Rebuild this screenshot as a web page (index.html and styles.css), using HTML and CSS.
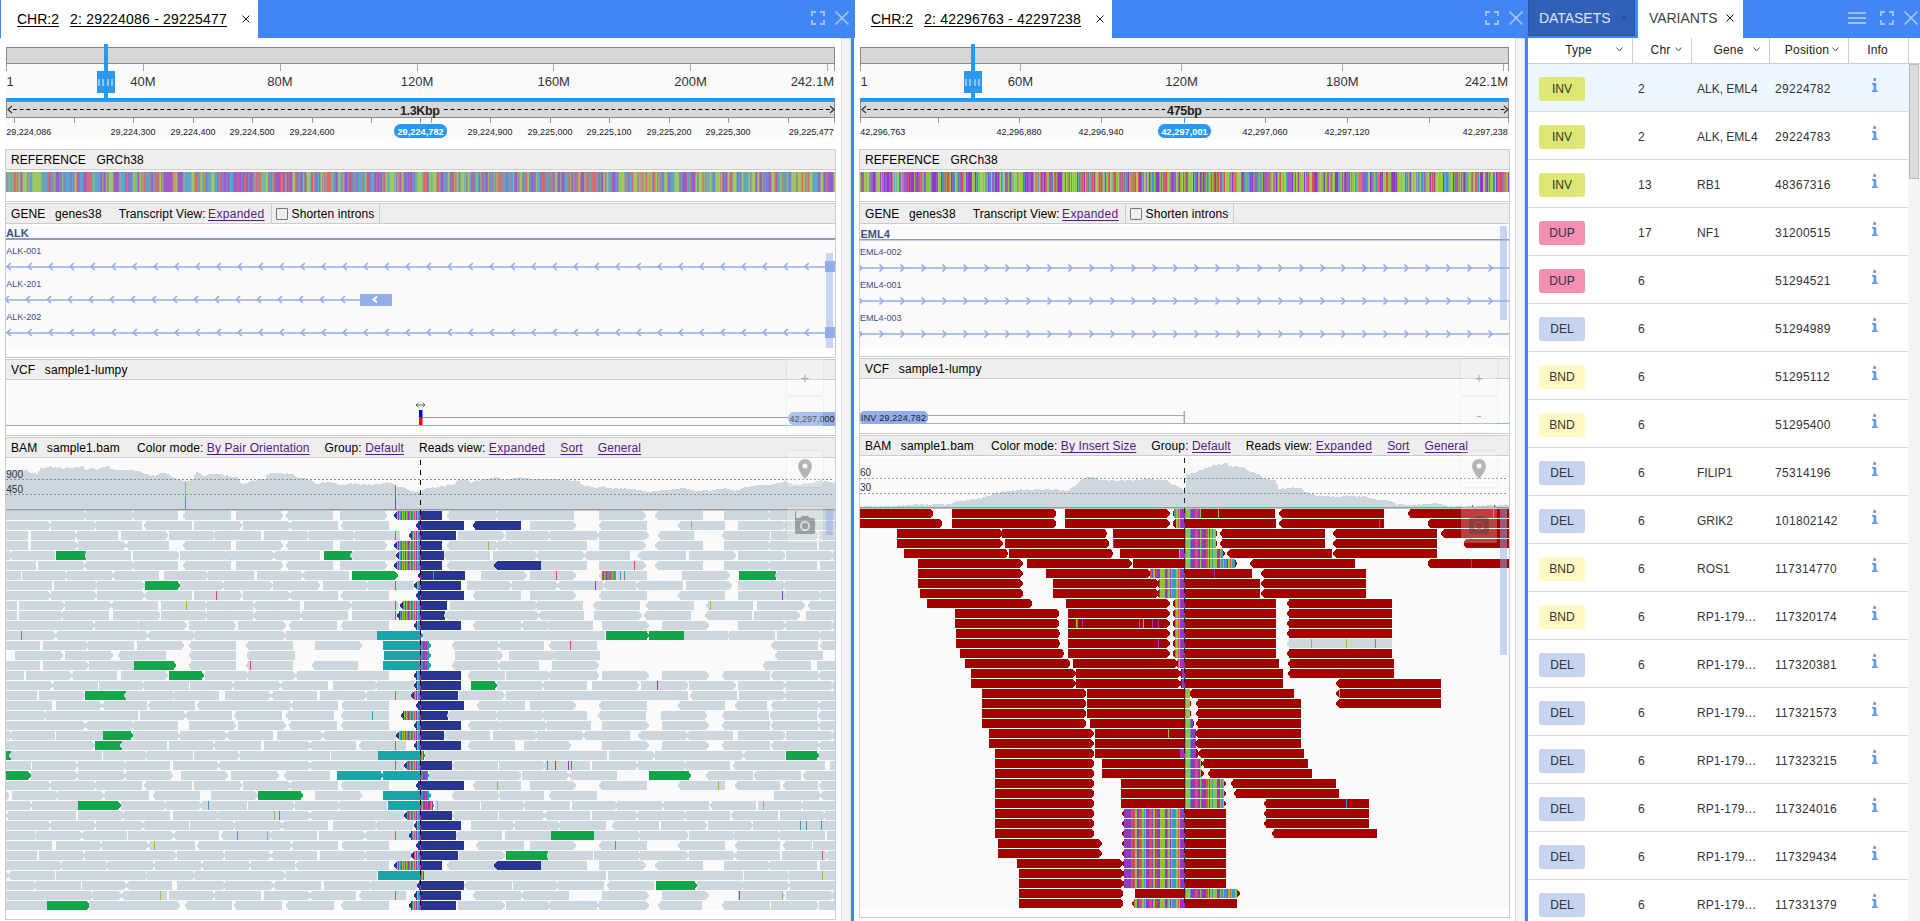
FILE: index.html
```html
<!DOCTYPE html>
<html lang="en">
<head>
<meta charset="utf-8">
<title>Genome Browser</title>
<link rel="stylesheet" href="styles.css">
</head>
<body>
<main class="app">
  <section class="panel panel-left">
    <header class="bar">
      <div class="tab"><a class="chr">CHR:2</a><a class="range">2: 29224086 - 29225477</a><svg class="x" viewBox="0 0 8 8"><path d="M.5 .5l7 7M7.5 .5l-7 7"/></svg></div>
      <div class="tools"><svg class="ico fs" viewBox="0 0 14 14"><path d="M1 5V1H5M9 1H13V5M13 9V13H9M5 13H1V9"/></svg><svg class="ico cl" viewBox="0 0 14 14"><path d="M.5 .5l13 13M13.5 .5l-13 13"/></svg></div>
    </header>
    <div class="body">
      <div class="tracks">
        <svg class="ruler" id="ruler-a" viewBox="6 44 829 95"></svg>
        <article class="track"><h3><span>REFERENCE</span><span>GRCh38</span></h3><svg class="seq" id="seq-a" viewBox="6 172 829 20"></svg></article>
        <article class="track gene"><h3><span>GENE</span><span>genes38</span><span class="opt">Transcript View: <a class="ex">Expanded</a></span><label><i></i>Shorten introns</label></h3><svg class="cv" id="gene-a" viewBox="6 226 829 122"></svg></article>
        <article class="track vcf"><h3><span>VCF</span><span>sample1-lumpy</span></h3><svg class="cv" id="vcf-a" viewBox="6 382 829 44"></svg></article>
        <article class="track bam"><h3><span>BAM</span><span>sample1.bam</span><span class="opt">Color mode: <a>By Pair Orientation</a></span><span class="opt">Group: <a>Default</a></span><span class="opt">Reads view: <a class="ex">Expanded</a></span><span class="opt"><a>Sort</a></span><span class="opt"><a>General</a></span></h3><svg class="cv" id="bam-a" viewBox="6 460 829 450"></svg></article>
      </div>
      <div class="gutter"></div>
      <div class="float"><b>+</b><b></b><b class="gap"><svg class="pin" viewBox="0 0 14 20"><path fill-rule="evenodd" d="M7 0a7 7 0 0 0-7 7c0 5.200 7 13 7 13s7-7.800 7-13a7 7 0 0 0-7-7zm0 4.500a2.500 2.500 0 1 1 0 5 2.500 2.500 0 0 1 0-5z"/></svg></b><b class="gap2"><svg class="cam" viewBox="0 0 20 18"><path fill-rule="evenodd" d="M7 0L5.200 2H2a2 2 0 0 0-2 2v12a2 2 0 0 0 2 2h16a2 2 0 0 0 2-2V4a2 2 0 0 0-2-2h-3.200L13 0zM10 5a5 5 0 1 1 0 10 5 5 0 0 1 0-10z"/><circle cx="10" cy="10" r="3.200"/></svg></b></div>
    </div>
  </section>
  <section class="panel panel-mid">
    <header class="bar">
      <div class="tab"><a class="chr">CHR:2</a><a class="range">2: 42296763 - 42297238</a><svg class="x" viewBox="0 0 8 8"><path d="M.5 .5l7 7M7.5 .5l-7 7"/></svg></div>
      <div class="tools"><svg class="ico fs" viewBox="0 0 14 14"><path d="M1 5V1H5M9 1H13V5M13 9V13H9M5 13H1V9"/></svg><svg class="ico cl" viewBox="0 0 14 14"><path d="M.5 .5l13 13M13.5 .5l-13 13"/></svg></div>
    </header>
    <div class="body">
      <div class="tracks">
        <svg class="ruler" id="ruler-b" viewBox="860 44 649 95"></svg>
        <article class="track"><h3><span>REFERENCE</span><span>GRCh38</span></h3><svg class="seq" id="seq-b" viewBox="860 172 649 20"></svg></article>
        <article class="track gene"><h3><span>GENE</span><span>genes38</span><span class="opt">Transcript View: <a class="ex">Expanded</a></span><label><i></i>Shorten introns</label></h3><svg class="cv" id="gene-b" viewBox="860 226 649 121"></svg></article>
        <article class="track vcf"><h3><span>VCF</span><span>sample1-lumpy</span></h3><svg class="cv" id="vcf-b" viewBox="860 381 649 43"></svg></article>
        <article class="track bam"><h3><span>BAM</span><span>sample1.bam</span><span class="opt">Color mode: <a>By Insert Size</a></span><span class="opt">Group: <a>Default</a></span><span class="opt">Reads view: <a class="ex">Expanded</a></span><span class="opt"><a>Sort</a></span><span class="opt"><a>General</a></span></h3><svg class="cv" id="bam-b" viewBox="860 458 649 450"></svg></article>
      </div>
      <div class="gutter"></div>
      <div class="float"><b>+</b><b>-</b><b class="gap"><svg class="pin" viewBox="0 0 14 20"><path fill-rule="evenodd" d="M7 0a7 7 0 0 0-7 7c0 5.200 7 13 7 13s7-7.800 7-13a7 7 0 0 0-7-7zm0 4.500a2.500 2.500 0 1 1 0 5 2.500 2.500 0 0 1 0-5z"/></svg></b><b class="gap2"><svg class="cam" viewBox="0 0 20 18"><path fill-rule="evenodd" d="M7 0L5.200 2H2a2 2 0 0 0-2 2v12a2 2 0 0 0 2 2h16a2 2 0 0 0 2-2V4a2 2 0 0 0-2-2h-3.200L13 0zM10 5a5 5 0 1 1 0 10 5 5 0 0 1 0-10z"/><circle cx="10" cy="10" r="3.200"/></svg></b></div>
    </div>
  </section>
  <section class="panel panel-right">
    <header class="bar">
      <div class="tab off"><span>DATASETS</span><svg class="x" viewBox="0 0 8 8"><path d="M.5 .5l7 7M7.5 .5l-7 7"/></svg></div>
      <div class="tab on"><span>VARIANTS</span><svg class="x" viewBox="0 0 8 8"><path d="M.5 .5l7 7M7.5 .5l-7 7"/></svg></div>
      <div class="tools"><svg class="ico mn" viewBox="0 0 18 12"><path d="M0 1H18M0 6H18M0 11H18"/></svg><svg class="ico fs" viewBox="0 0 14 14"><path d="M1 5V1H5M9 1H13V5M13 9V13H9M5 13H1V9"/></svg><svg class="ico cl" viewBox="0 0 14 14"><path d="M.5 .5l13 13M13.5 .5l-13 13"/></svg></div>
    </header>
    <div class="thead">
      <div class="c1">Type<svg viewBox="0 0 7 5"><path d="M.5 .5l3 3.500 3-3.500"/></svg></div>
      <div class="c2">Chr<svg viewBox="0 0 7 5"><path d="M.5 .5l3 3.500 3-3.500"/></svg></div>
      <div class="c3">Gene<svg viewBox="0 0 7 5"><path d="M.5 .5l3 3.500 3-3.500"/></svg></div>
      <div class="c4">Position<svg viewBox="0 0 7 5"><path d="M.5 .5l3 3.500 3-3.500"/></svg></div>
      <div class="c5">Info</div>
    </div>
    <div class="scroll"><div class="rows" id="rows"></div><div class="sb"><div class="thumb"></div></div></div>
  </section>
</main>
<script src="app.js"></script>
</body>
</html>
```
FILE: styles.css
```css
* { box-sizing: border-box; }
body { margin: 0; overflow: hidden; background: #fff; font: 12px/16px "Liberation Sans", Arial, sans-serif; color: #000; }
svg { display: block; }
.app { display: flex; height: 921px; }
.panel { position: relative; height: 921px; display: flex; flex-direction: column; background: #fff; }
.panel-left { width: 854px; border-right: 3px solid #4285f5; }
.panel-mid { width: 674px; border-right: 3px solid #4285f5; }
.panel-right { width: 392px; }
.bar { height: 38px; flex: none; background: #4285f5; display: flex; align-items: flex-start; }
.panel-left .bar { margin-right: -1px; }
.tab { display: flex; align-items: center; height: 38px; width: 257px; margin-left: 1px; background: #fff; font-size: 14px; padding-left: 16px; color: #000; }
.tab a { text-decoration: underline; text-underline-offset: 2px; }
.tab .chr { width: 53px; }
.tab .range { width: 172px; letter-spacing: .2px; white-space: nowrap; }
.x { width: 8px; height: 8px; fill: none; stroke: currentColor; stroke-width: .9; }
.tools { margin-left: auto; display: flex; align-items: center; height: 36px; gap: 10px; padding-right: 3px; }
.panel-mid .tools, .panel-right .tools { padding-right: 2px; }
.ico { width: 14px; height: 14px; fill: none; stroke: #a0c2fa; stroke-width: 2; }
.ico.cl { stroke-width: 1.700; }
.ico.mn { width: 18px; height: 12px; margin-right: 4px; }
.body { flex: 1; display: flex; padding-left: 5px; min-height: 0; }
.tracks { flex: none; width: 831px; padding-top: 6px; margin-right: 5px; }
.panel-mid .tracks { width: 651px; }
.gutter { width: 10px; flex: none; background: #f5f5f5; border: 1px solid #ddd; border-bottom: 0; }
.ruler { width: 829px; height: 95px; margin: 0 0 10px 1px; background: #fafafa; }
.panel-mid .ruler, .panel-mid .seq, .panel-mid .cv { width: 649px; }
.track { height: 53px; border: 1px solid #ccc; margin-bottom: 1px; }
.track h3 { margin: 0 0 2px; height: 20px; background: #eee; border-bottom: 1px solid #ccc; font-size: 12px; font-weight: 400; line-height: 20px; display: flex; padding-left: 5px; letter-spacing: .1px; white-space: nowrap; }
.track h3 > span { margin-right: 10.500px; }
.gene h3 > span, .vcf h3 > span, .bam h3 > span { margin-right: 9.500px; }
.track h3 > span:nth-child(2) { margin-right: 17px; }
.track h3 .opt { margin-right: 15px; }
.track h3 a { color: #551a8b; text-decoration: underline; text-underline-offset: 2px; }
.track h3 a.ex { letter-spacing: .3px; }
.gene h3 a.ex { margin-left: -1px; }
.track label { border: solid #ccc; border-width: 0 1px; display: flex; align-items: center; gap: 4px; padding: 0 5px 0 4px; margin-left: -9px; }
.track label i { width: 12px; height: 12px; border: 1px solid #767676; border-radius: 1px; }
.seq { width: 829px; height: 20px; }
.cv { width: 829px; background: #fafafa; }
.gene { height: 155px; } .vcf { height: 77px; } .bam { height: 483px; }
.panel-mid .gene { height: 154px; } .panel-mid .vcf { height: 76px; }
.float { position: absolute; left: 787px; top: 359px; width: 36px; }
.panel-mid .float { left: 607px; }
.float b { display: flex; align-items: center; justify-content: center; width: 36px; height: 36px; margin-bottom: 2px; background: rgba(250,250,250,.25); border-radius: 2px; box-shadow: 0 0 3px rgba(0,0,0,.09); font: 15px "Liberation Sans", sans-serif; color: #aaa; }
.float .gap { margin-top: 18px; }
.float .gap2 { margin-top: 20px; }
.pin { width: 14px; height: 20px; fill: #b5b5b5; }
.cam { width: 20px; height: 18px; fill: rgba(60,60,60,.4); }
svg text { font-family: "Liberation Sans", Arial, sans-serif; }

.panel-right .tab { width: 107px; height: 36px; margin-left: 0; padding: 0 0 0 10px; background: #3160b8; color: #dfe7f6; letter-spacing: -.05px; border: 1px solid #2b57a8; border-width: 0 1px 1px; }
.panel-right .tab span { width: 81px; }
.panel-right .tab.off .x { color: #244a90; }
.panel-right .tab.on { height: 38px; width: 105px; margin-left: 3px; padding-bottom: 2px; background: #fff; color: #444; border: 0; padding-left: 11px; }
.panel-right .tab.on span { width: 77px; }
.panel-right .tab.on .x { color: #000; }
.thead { height: 26px; flex: none; display: grid; grid-template-columns: 105px 59px 78px 79px 60px 1fr; border-bottom: 1px solid #ccc; }
.thead div { border-right: 1px solid #ccc; position: relative; line-height: 24px; text-align: center; color: #222; letter-spacing: .15px; }
.thead .c1 { padding-right: 3px; } .thead .c2 { padding-right: 3px; } .thead .c3 { padding-right: 4px; } .thead .c4 { padding-right: 4px; letter-spacing: .2px; } .thead .c5 { padding-right: 2px; }
.thead svg { position: absolute; right: 9px; top: 9px; width: 7px; height: 5px; fill: none; stroke: #555; stroke-width: 1; }
.thead .c4 svg { right: 9px; }
.scroll { display: flex; flex: 1; overflow: hidden; }
.rows { width: 380px; flex: none; }
.row { display: grid; grid-template-columns: 99px 59px 78px 79px 1fr; align-items: center; height: 48px; padding: 2px 0 0 11px; border-bottom: 1px solid #d8d8d8; color: #333; letter-spacing: .3px; }
.row:first-child { background: #eef6ff; }
.badge { width: 46px; height: 24px; border-radius: 3px; line-height: 24px; text-align: center; letter-spacing: 0; font-size: 12px; }
.INV { background: #dce775; } .DUP { background: #f48fb1; } .DEL { background: #c7d4f0; } .BND { background: #fff9c4; }
.info { width: 6px; height: 14px; margin: -7px 0 0 18px; fill: #6299f8; }
.gname { letter-spacing: 0; }
.sb { flex: 1; background: #f5f5f5; }
.thumb { height: 115px; width: 10px; margin-left: 1px; background: #dcdcdc; border: 1px solid #bbb; }
```
FILE: app.js
```js
const $ = id => document.getElementById(id);
const LIME = '#8cc63f', RED = '#dc5050', PURPLE = '#9138c4', BLUE = '#3f98c4';
const BASES = { g: LIME, r: RED, p: PURPLE, b: BLUE };
const fill = (x, y, w, h, c, extra = '') => `<rect x="${x}" y="${y}" width="${w}" height="${h}" fill="${c}" ${extra}/>`;
const label = (x, y, s, size, anchor = 'middle', extra = '') => `<text x="${x}" y="${y}" font-size="${size}" text-anchor="${anchor}" ${extra}>${s}</text>`;
function rng(seed) { return () => (seed = (seed * 1103515245 + 12345) % 2147483648) / 2147483648; }

/* Chromosome and position rulers */
function ruler(id, o) {
  const { x0, x1 } = o, w = x1 - x0;
  let s = `<g shape-rendering="crispEdges">` + fill(x0, 47, w, 17, '#888') + fill(x0 + 1, 48, w - 2, 15, '#d7d7d7');
  s += fill(x0, 64, 1, 7, '#999') + fill(x1 - 1, 64, 1, 7, '#999');
  o.top.forEach(t => s += fill(Math.round(t[0] - .5), 64, 1, 7, '#aaa'));
  s += fill(x0, 98, w, 3, '#2b98f0') + fill(x0, 101, w, 17, '#888') + fill(x0 + 1, 102, w - 2, 15, '#d7d7d7');
  s += fill(o.slider, 44, o.sliderW, 54, '#2b98f0') + fill(o.slider - 7, 71, 18, 22, '#2b98f0');
  [-6, -2, 3, 7].forEach(d => s += fill(o.slider + d, 79, 2, 7, '#8fc8f8'));
  o.ticks.forEach(t => s += fill(Math.round(t - .5), 118, 1, 5, '#999'));
  s += fill(Math.round(o.mid - .5), 118, 1, 5, '#2b98f0') + '</g>';
  o.top.forEach(t => s += t[1] ? label(t[0], 86, t[1], 13, 'middle', 'fill="#333"') : '');
  s += label(x0 + .5, 86, '1', 13, 'start', 'fill="#333"') + label(x1 - 1, 86, '242.1M', 13, 'end', 'fill="#333"');
  s += `<path d="M${x0 + 7} 109.5H${o.span[0] - 2}M${o.span[1] + 4} 109.5H${x1 - 4}" stroke="#000" stroke-dasharray="3.700 3"/>`;
  s += `<path d="M${x0 + 6} 106l-4 3.500 4 3.500M${x1 - 5} 106l4 3.500-4 3.500" fill="none" stroke="#333" stroke-width="1.200"/>`;
  s += label((o.span[0] + o.span[1]) / 2, 114.700, o.length, 12.5, 'middle', `font-weight="bold" fill="#222" textLength="${o.span[1] - o.span[0]}"`);
  s += label(x0 + .3, 134.700, o.first, 9, 'start', 'fill="#222"') + label(x1 - 1.3, 134.700, o.last, 9, 'end', 'fill="#222"');
  o.labels.forEach(t => s += label(t[0], 134.700, t[1], 9, 'middle', 'fill="#222"'));
  s += `<rect x="${o.mid - 26.500}" y="124" width="53" height="14" rx="6.500" fill="#2b98f0"/>` + label(o.mid, 134.700, o.here, 9, 'middle', 'fill="#fff" font-weight="bold" textLength="46"');
  $(id).innerHTML = s;
}
ruler('ruler-a', { x0: 6, x1: 835, slider: 104, sliderW: 4, top: [[143, '40M'], [280, '80M'], [417, '120M'], [553.7, '160M'], [690.5, '200M'], [827.5, '']],
  ticks: [14.5, 74, 133.5, 193, 252.5, 312, 371.7, 431.5, 490.5, 550, 609.5, 669, 728.5, 788, 834.5], mid: 420.5, span: [400, 440], length: '1.3Kbp',
  first: '29,224,086', last: '29,225,477', here: '29,224,782',
  labels: [[133, '29,224,300'], [193, '29,224,400'], [252, '29,224,500'], [312, '29,224,600'], [490, '29,224,900'], [550, '29,225,000'], [609, '29,225,100'], [669, '29,225,200'], [728, '29,225,300']] });
ruler('ruler-b', { x0: 860, x1: 1509, slider: 971, sliderW: 4, top: [[1020.5, '60M'], [1181.5, '120M'], [1342.3, '180M'], [1503, '']],
  ticks: [860.5, 938.5, 1019.7, 1101.5, 1265, 1347, 1429, 1508.5], mid: 1184.5, span: [1167, 1202], length: '475bp',
  first: '42,296,763', last: '42,297,238', here: '42,297,001',
  labels: [[1019, '42,296,880'], [1101, '42,296,940'], [1265, '42,297,060'], [1347, '42,297,120']] });

/* Reference sequence strips */
function hex(c) { return [1, 3, 5].map(i => parseInt(c.slice(i, i + 2), 16)); }
function sequence(id, x0, w, seed, soft) {
  const r = rng(seed), cols = (soft ? [LIME, RED, PURPLE, BLUE, LIME, PURPLE, BLUE] : [LIME, PURPLE, RED, LIME, PURPLE, BLUE, LIME, PURPLE]).map(hex);
  let s = '<g shape-rendering="crispEdges">', prev = cols[0];
  for (let x = 0; x < w; x++) {
    const a = r() < .25 ? prev : cols[Math.floor(r() * cols.length)], k = soft ? .38 : (r() < .5 ? 0 : .3);
    const gain = soft ? .8 : (r() < .5 ? 1 : .82), lift = soft ? 44 : (gain === 1 ? 0 : 44);
    const mix = a.map((v, i) => Math.round((v * (1 - k) + prev[i] * k) * gain + lift));
    prev = a;
    s += fill(x0 + x, 172, 1, 20, `rgb(${mix})`);
  }
  $(id).innerHTML = s + '</g>';
}
sequence('seq-a', 6, 829, 77, true);
sequence('seq-b', 860, 649, 1234, false);

/* Gene tracks */
const INK = '#3c5083', LINE = '#aec1ef', MARK = '#92aee8';
function arrows(y, tip, end, dir, x0, stop) {
  let s = fill(x0, y - 1, stop - x0, 2, LINE, 'shape-rendering="crispEdges"');
  for (let x = tip; x < end; x += 21) s += `<path d="M${x + 3.500 * dir} ${y - 3.500}L${x} ${y}L${x + 3.500 * dir} ${y + 3.500}" fill="none" stroke="${MARK}" stroke-width="1.700"/>`;
  return s;
}
(() => {
  let s = label(6, 237, 'ALK', 11, 'start', `font-weight="bold" fill="${INK}"`) + fill(6, 238, 829, 2, '#929cb8');
  s += fill(826, 253, 7, 95, '#c8d5f0');
  [['ALK-001', 266.5], ['ALK-201', 299.5], ['ALK-202', 332.5]].forEach(([n, y], i) => {
    s += label(6.3, y - 13, n, 9, 'start', `fill="${INK}"`);
    s += i === 1 ? arrows(y, 5.5, 355, 1, 6, 360) : arrows(y, 7.300, 820, 1, 6, 835);
    s += i === 1 ? fill(360, 294, 32, 12, MARK) + `<path d="M377 296.500l-3.500 3 3.500 3" fill="none" stroke="#fff" stroke-width="1.800"/>` : fill(825, y - 5.5, 10, 11, MARK);
  });
  $('gene-a').innerHTML = s;
  s = label(860.5, 238, 'EML4', 11, 'start', `font-weight="bold" fill="${INK}"`) + fill(860, 239, 649, 1.500, '#929cb8');
  [['EML4-002', 268], ['EML4-001', 301], ['EML4-003', 334]].forEach(([n, y]) => {
    s += label(860, y - 13.200, n, 9, 'start', `fill="${INK}"`) + arrows(y, 862, 1500, -1, 860, 1509);
  });
  s += fill(1500, 226, 7, 94, 'rgba(146,174,232,.5)');
  $('gene-b').innerHTML = s;

  s = `<path d="M416 405H425M418.500 402.800l-2.500 2.200 2.500 2.200M422.500 402.800l2.500 2.200-2.500 2.200" fill="none" stroke="#555" stroke-width=".9"/>`;
  s += fill(6, 425, 829, 1, MARK) + fill(422, 417, 368, 1, '#999') + fill(419, 410, 3.5, 7, '#00f') + fill(419, 417, 3.5, 8, '#f00');
  s += `<rect x="788" y="412" width="52" height="13" rx="6" fill="${MARK}"/>` + label(834.5, 421.7, '42,297,000', 9, 'end', 'fill="#222"');
  $('vcf-a').innerHTML = s;
  s = fill(860, 423, 649, 1, MARK) + fill(925, 415, 259, 1, '#aaa') + fill(1183.5, 411, 1.5, 12, '#aaa');
  s += `<rect x="859.500" y="411" width="68.500" height="12.500" rx="5" fill="${MARK}"/>` + label(861, 420.500, 'INV 29,224,782', 9, 'start', 'fill="#222" textLength="65"');
  $('vcf-b').innerHTML = s;
})();

/* Alignments: [colour]start-end[direction], single-letter ticks, m = clipped bases */
const C1 = ' b1242-1262< m1251-1261', C2 = ' b1183-1262< m1190-1261', C3 = ' b1248-1262<', C4 = ' b1227-1262< m1236-1261';
const readsA = [
  ['18-122 122-260> 259-395 394-534< 549-693< 708-849> 858-999< 1020-1161>' + C2, 'b0-66 81-227< 226-365< 365-462 537-677> 706-849< 912-1051> 1049-1245 r1126'],
  ['18-152> 153-290> 288-426 432-576< 582-726> 729-871> 868-1014< 1023-1167<' + C3, 'b0-132 b159-303< 330-467> 537-681< 774-915< l814 954-1097> 1095-1245'],
  ['18-84 93-231> 230-354 363-504> 507-647> 644-783 792-928> 927-1067> 1066-1200 r1186' + C4, 'b0-108 114-254> 258-392> 391-537> 537-686> 714-822< 906-1050< 1052-1195> 1196-1245'],
  ['18-84 93-233> 234-378> 378-507< 549-693< 708-849> 858-999< 1020-1161>' + C2, 'b0-66 81-227< l205 226-365< 365-501 537-677> 706-849< 912-1051> 1049-1191 1196-1245'],
  ['18-29 28-165< g168-258 254-393< 399-538> 540-682> 679-823> 820-960< g972-1056 1051-1189< b1189-1262< m1197-1261', 'b0-72 71-210< 219-353> 353-493> 493-630< 655-798< 807-947> 954-1096> 1098-1240> 1238-1245'],
  ['18-108 114-255> 254-395< 394-534< 549-693< 708-849> 858-999< 1020-1161>' + C2, 'b0-66 81-227< b223-363< 363-501 537-677> r643 706-849< 912-1051> 1049-1191 1200-1245'],
  ['18-63 66-203> 202-337 337-477< 492-626> 625-762 771-909> 907-1047< g1056-1193> b1255-1262<', 'b0-135 c40 183-320> 330-467> r409 537-681< m546-588 c601 c613 786-929> g957-1069 1065-1208< 1207-1245'],
  ['18-156 162-292> 291-434> g435-540> 541-674> 673-818> 819-960> 969-1106> 1104-1245> r1186 b1243-1262< m1252-1261', 'b0-123 141-275> 275-414> 412-549< p526 550-648< 649-789< 798-935> 954-1097> 1095-1245'],
  ['18-152> 153-290> 290-433> 433-576< 582-726> r649 729-871> 868-1014< 1023-1167<' + C3, 'b0-132 159-303< 330-467> 537-681< 774-915< 954-1094 p1088 1092-1198< 1196-1245<'],
  ['18-51 57-194> 195-334> 333-474< 483-623> l559 622-760 760-900< 912-1055> 1056-1198> r1186 b1201-1262< m1209-1261', 'b0-81 90-218 218-352> 351-489 520-660< 678-822< 858-999< l871 1011-1154> 1164-1245<'],
  ['18-51 57-190> 189-327 339-481> 483-623> 622-760 760-900< 900-1044< 1056-1190 r1186 b1191-1262< m1199-1261', 'b0-75 73-218< 217-357> 355-492< 522-665> 672-813< 856-996< 1002-1139> 1158-1245'],
  ['18-141 140-284> 285-420> 418-560> 567-708> 714-857> 867-1011< 1023-1167<' + C1, 'b0-123 159-303< 304-383< 381-519< 546-686> 726-866> 954-1097> 1098-1240> 1238-1245'],
  ['18-166> r64 166-306< 305-444> 442-578< 577-716< 715-857> 857-992 991-1131 t1131-1269>', '9-144 143-281 280-420 418-555 g558-687> g687-792 793-930> 928-1065 1071-1205> 1204-1245'],
  ['18-120 129-266> 264-402 411-552> 567-708< 738-879< 945-1086> t1149-1293> m1268-1285', '96-235< 234-372< 387-531< r451 1054-1194< 1200-1245<'],
  ['45-189> 195-339> 354-498< 567-708< 740-885< t1152-1293> m1268-1285', '105-249> 267-405> 402-540 1065-1209<'],
  ['18-120 129-266> 266-402 g402-528> 567-708< 738-879< r751 936-1074< t1149-1293> m1268-1285', '96-235< 234-357< 396-536> 1029-1173< 1191-1245'],
  ['18-72 78-215> 213-351< 363-504> g507-612> 615-745> 745-887> 885-1031< 1030-1167' + C1, 'b0-123 144-255< 258-391> 391-537> 546-686> 726-866> 906-1050< 1053-1194< 1195-1245<'],
  ['18-158> 156-294< 297-433> 432-567 570-702> 701-843> 842-984< 999-1133> 1132-1243' + C1, 'b0-123 g153-231> 231-366 366-501< 516-657> 663-805> p712 807-947> 954-1097> 1098-1240> 1238-1245'],
  ['18-111 117-255> g255-379 373-518< 516-657< 675-813> 813-951< 960-1100> 1101-1238 r1186 b1234-1262< m1242-1261', 'b0-114 117-254> 258-391 391-530 529-668 667-804 810-951< 957-1097> 1098-1245'],
  ['18-156 168-306> 306-441< 444-585< 591-736< 736-876> 873-1014< 1025-1167<' + C3, 'b0-132 171-315< 330-467> 537-681< 774-915< 945-1041< 1053-1194< 1195-1245<'],
  ['18-140> 139-278 277-414 420-558> 557-696< 702-847< 858-1002< 1023-1167< c1117 b1203-1262< m1211-1261', 'b0-84 82-227< 226-365< 364-501< 534-678< 723-861> 906-1047< 1049-1191< 1195-1245<'],
  ['18-120 120-257> 256-396< 394-534< 567-708> 714-857> 867-1011< 1023-1167<' + C1, 'b0-123 144-236< 234-374< 373-513< 546-686> 726-866> 906-1050< 1053-1194< 1195-1245<'],
  ['18-30 28-165< 168-309 g309-399> 399-540> 540-681> 679-819< 831-969> 967-1058< 1057-1188 b1189-1262< m1197-1261', 'b0-72 71-210< 219-352> 350-492> 490-630< 655-798< 799-939< 954-1096> 1098-1240> 1238-1245'],
  ['18-140 139-284> g285-366 361-501< 507-645> 644-783 792-931> 928-1068< 1077-1218< r1186' + C1, 'b0-123 144-285< 312-453> 546-686> 726-866> 906-1050< 1053-1194< 1195-1245<'],
  ['g18-33 27-170< 169-306 309-443> 442-579 582-720> 719-860 858-990 993-1133 t1134-1275> m1266-1272', '15-152 151-290 289-425 424-561 567-704> 705-839 837-972> 970-1095< g1098-1197> 1197-1245'],
  ['18-93 96-233> 233-373 371-510< 519-657> 655-795< 794-931> 928-1074< 1072-1212 r1186 b1213-1262< m1221-1261', 'b0-96 96-234< 237-377> 375-510 c382 p406 p445 r454 516-654> 653-792 791-930< 939-1080< 1079-1215 1230-1245'],
  ['g18-92> 93-233> 234-377> 378-519> 543-684> 693-837> 852-990< t1011-1149> t1149-1287> m1268-1284', '27-164 163-304> 306-447> 447-591< g687-813> 858-1000< 1001-1143< 1149-1245<'],
  ['18-152> 153-290> 288-426 432-576< 582-726> 729-871> 868-1014< 1023-1167<' + C3, 'b0-132 159-303< l232 330-467> 537-681< 774-915< l895 945-1080< 1089-1194< 1197-1245<'],
  ['18-28> 36-175> 174-311> 309-447< 459-600< 633-773> g774-909> 945-1086> t1149-1293> m1268-1285', '96-235< 234-372< 387-531< 1062-1203> 1201-1245<'],
  ['18-96> 96-234 g234-362> 362-500> 498-604> 600-741< c625 744-885> 884-1022> 1020-1161 t1164-1302> m1266-1300', '45-180 l52 183-315> 314-450 456-593> 592-726 726-867< 870-1008< 1014-1151> l1030 1150-1245'],
  ['18-93< 92-228 234-373> 371-510 519-657> 655-795 794-931> l823 c838 928-1074< 1072-1212 b1213-1262< m1221-1261', 'b0-96 96-234< 237-375> 374-510< 516-654> 653-792 791-930< 933-1074< 1080-1216> 1215-1245'],
  ['18-152> 153-288> 287-430> 427-567< 570-707> 706-847> 844-984< 999-1132> 1131-1238' + C1, 'b0-123 153-285> 284-421> 420-558 576-717< 723-861> 864-999> 998-1139> 1135-1245 c1141 c1159 c1204'],
  ['18-111> 109-247> 245-381< 384-521> 520-657< 663-809< c712 l802 808-951< 957-1096> 1094-1230< r1186' + C4, 'b0-108 107-246< 255-393 g393-522 522-662> 661-805> 806-945> 943-1081> 1080-1215 1221-1245'],
  ['18-156 168-306> 306-446> 444-585< l463 591-736< 736-876> 873-1014< 1025-1167<' + C3, 'b0-132 168-312< 330-467> 537-681< c586 774-915< 945-1080< 1089-1176< 1179-1245'],
  ['18-111 117-255> 254-391 391-530> 531-675> 675-813> 813-951< 960-1100> 1098-1238> b1234-1262< m1242-1261', 'b0-114 117-254> g258-384 380-519< 522-663> 661-806> 807-945> 944-1080< 1086-1226> r1207 1224-1245'],
  ['18-74 73-187> 186-326> 325-459 459-603< 604-747< 747-885< 886-1029< 1029-1167' + C2, 'b0-66 81-227< b223-363< 363-501 537-677> 706-849< 912-1051> 1049-1191 1200-1245'],
  ['18-26> 25-166< 167-305 304-444> 442-578 577-716< 715-857> 857-992 991-1131 t1134-1272> m1265-1271', '12-150 149-288 287-425 424-558 564-702 701-837 836-969 972-1110> 1108-1245 l1207'],
  ['18-109> 108-243 246-380> 379-516< 531-676> 675-820> 820-963< 972-1116> 1113-1255> b1251-1262<', 'b0-132 133-276< 279-416> 414-552 561-702< g708-831> 831-972> 970-1109> 1110-1245'],
  ['18-281> 280-365> 364-501< l481 507-645> 644-783 792-931> 928-1068< 1077-1218< r1186' + C1, 'b0-123 159-303< 304-447< 546-686> 726-866> 954-1095> p958 l1088 1098-1240> 1238-1245'],
  ['18-140 g141-268> 268-401 400-540> 555-696< 702-847< 858-1002< 1023-1167<' + C4, 'b0-108 114-254> 258-392> 391-537> 537-686> 714-846< 906-1050< 1052-1195> 1196-1245']
];
const M1 = ' 510-748> 755-996< m761-783', E1 = ' 1023-1268<', K = '339-572>', W = ' 637-880< m642-783';
const readsB = [
  '22-195> 239-483> 503-748> 755-995< m757-822 l862 1005-1250< 1306-1542< r1507',
  '22-216> 239-483> 503-748> 755-996< m764-783 1005-1250< p1239 1352-1542<',
  '110-357> 356-602> 615-860> m784-855 866-1112< 1131-1374< 1384-1542<',
  '110-357> 363-607> 616-860> p616 m784-855 866-1112< 1131-1374< 1436-1542<',
  '126-370> 372-616> 632-877> m769-873 883-1128< 1131-1374<',
  '159-404> 414-659> 662-906> m784-902 937-1182< 1352-1542< p1455',
  '159-404> 459-703> 700-941< m703-783 p852 963-1208<',
  '159-404> 475-721> 717-960< m721-783 963-1208<',
  '164-406> 475-721> 717-960< m721-783 963-1208<',
  '180-427> 506-748> 755-997< m761-783' + E1,
  '246-490>' + M1 + E1,
  '246-490>' + M1 + ' l530 c533 p543 p677 l688 p709 p723' + E1,
  '248-492>' + M1 + E1,
  '248-492>' + M1 + ' p723 w1023-1268< l1079 l1161 c1230',
  '257-501>' + M1 + E1,
  '269-516> 522-766> 762-1004< m766-783 1025-1273<',
  '283-528> 529-773> 770-1013< m776-783 1025-1273<',
  '283-528> 529-773> 770-1013< m776-783 1138-1383<',
  '309-553> 555-799> m784-794 795-1039< 1138-1383< l1145',
  '309-553> 555-799> m784-794 810-1055< 1138-1383<',
  '309-553> 555-799> m784-794 810-1055<',
  '309-553> 562-806> m784-800 810-1055<',
  '325-570> 573-814> l745 m784-807 808-1055<',
  '325-570> 573-814> m784-807 808-1055<',
  K + ' 573-817> m773-807 815-1062<',
  K + ' 590-826> m784-820 824-1072<',
  K + ' 590-828> m784-822 838-1081<',
  K + ' 634-879> m784-874 892-1137<',
  K + ' 634-879> m784-874 899-1144<',
  K + ' 634-879> m784-874 969-1215< c1161',
  K + W + ' 969-1215<', K + W + ' 969-1215<', K + W + ' 988-1233<',
  '346-589>' + W, '346-589>' + W, '391-638>' + W, '396-640>' + W, '396-640>' + W,
  '396-640> 667-912> m784-905',
  '396-640> 660-906< m666-783'
];
const TICK = { r: RED, l: LIME, p: PURPLE, c: BLUE };
const READ = { g: '#13a54a', b: '#283593', t: '#1aa5a8', w: '#cdd7dd', d: '#a50000' };
const CLIP_L = 'pprprgpprbgbgpprrpgprppggggpbgpgbbbgrgppp';
const CLIP_R = 'bgggbppprrpgrppprgpgbgggppgbgbbpgrgbbggg';
/* Clipped bases of the left view, keyed by the first column they cover */
const CLIP_A = { 397: 'gpgbpgbgpgbprgpbgrgpgbrp', 421: 'bgpprprpprgpb', 602: 'rpgbpbbbrbgbbb' };
const clipAt = p => { for (const k in CLIP_A) { const c = CLIP_A[k][p - k]; if (c) return c; } return 'g'; };

function drawRow(tokens, base, toX, y, mid, wide) {
  let s = '';
  tokens.split(' ').forEach(t => {
    const m = t.match(/^([a-z]?)(\d+)(?:-(\d+))?([<>]?)$/);
    if (!m) return;
    const x = toX(+m[2]);
    if (!m[3]) { s += fill(Math.floor(x), y, 1, 9, TICK[m[1]]); return; }
    const e = toX(+m[3]);
    if (m[1] === 'm') {
      if (!wide) { for (let p = Math.round(x); p < e - .4; p++) s += fill(p, y, 1, 9, BASES[clipAt(p)]); return; }
      const step = 1.368;
      if (x < mid - 1) {
        for (let k = 0, p = mid - step; p > x - .7 && k < CLIP_L.length + 4; k++, p -= step) s += fill(p.toFixed(2), y, step + .1, 9, BASES[CLIP_L[CLIP_L.length - 1 - k] || 'p']);
      }
      if (e > mid + 1) for (let k = 0, p = mid; p < e - .4; k++, p += step) s += fill(p.toFixed(2), y, step + .1, 9, BASES[CLIP_R[k] || 'g']);
      return;
    }
    const c = READ[m[1]] || base, d = Math.min(2.700, e - x);
    if (m[4] === '<') s += `<path d="M${x + d} ${y}H${e}V${y + 9}H${x + d}L${x} ${y + 5.500}V${y + 3.500}Z" fill="${c}"/>`;
    else if (m[4] === '>') s += `<path d="M${x} ${y}H${e - d}L${e} ${y + 3.500}V${y + 5.500}L${e - d} ${y + 9}H${x}Z" fill="${c}"/>`;
    else s += fill(x, y, e - x, 9, c);
  });
  return s;
}

const coverA = '18,690 75,690 92,700 108,700 120,687 150,680 180,685 215,682 245,677 255,689 270,683 290,690 310,680 325,678 330,687 370,690 410,693 430,700 465,709 480,698 495,700 520,713 555,724 575,717 585,698 597,698 602,708 630,702 660,703 690,709 712,712 722,735 750,722 790,717 805,700 825,696 840,701 872,701 885,712 930,718 945,730 990,728 1020,735 1050,730 1080,733 1100,735 1140,733 1155,725 1175,733 1190,740 1210,745 1235,753 1262,755 1270,745 1320,740 1360,735 1370,718 1385,718 1410,727 1460,715 1485,711 1505,717 1525,717 1550,711 1590,716 1630,718 1660,717 1690,720 1730,723 1745,735 1785,744 1805,738 1820,745 1860,746 1900,747 1940,756 1990,750 2050,744 2080,753 2130,752 2175,744 2205,754 2230,742 2270,736 2320,733 2350,724 2380,735 2420,730 2460,722 2505,728';
const coverB = '22,800 105,799 155,793 235,793 245,783 305,775 340,757 395,750 440,747 485,750 505,754 520,740 545,713 565,710 580,720 650,722 690,716 740,720 750,733 770,740 780,757 785,705 805,698 820,690 848,675 873,674 878,666 883,679 915,680 935,695 955,702 965,714 995,722 1000,745 1020,747 1035,742 1055,745 1065,757 1090,767 1140,772 1160,767 1205,770 1230,780 1265,783 1275,793 1320,796 1370,790 1400,800 1450,799 1500,796 1542,797';
function coverage(data, toX, x0, x1, base, seed) {
  const pts = data.split(' ').map(p => p.split(',').map(Number)).map(([x, y]) => [toX(x), 240 + y / 3]);
  const r = rng(seed);
  let s = '', i = 0;
  for (let x = x0; x < x1; x += 2) {
    while (i < pts.length - 2 && pts[i + 1][0] < x) i++;
    const [a, b] = [pts[i], pts[i + 1]], k = Math.max(0, Math.min(1, (x - a[0]) / (b[0] - a[0])));
    const y = Math.round(a[1] + (b[1] - a[1]) * k + (r() - .5) * 1.2);
    s += fill(x, y, 2, base - y, '#cdd7dd');
  }
  return s;
}
(() => {
  const xa = v => v / 3, xb = v => 420 + v / 3, xm = v => 850 + v / 2.3403;
  let s = '<g shape-rendering="crispEdges">' + coverage(coverA, xa, 6, 835, 509, 5);
  s += fill(185, 482, 1, 15, LIME) + fill(185, 497, 1, 12, BLUE) + fill(395, 485, 1, 13, RED) + fill(395, 498, 1, 11, PURPLE);
  s += '<path d="M6 479.500H833M6 494.500H833" stroke="#8c8c8c" stroke-dasharray="2 2"/>' + fill(6, 509, 829, 1, '#999') + fill(6, 510, 829, 1, '#c4c4c4');
  readsA.forEach(([a, b], i) => { s += drawRow(a, READ.w, xa, 511 + i * 10, 420.5) + drawRow(b, READ.w, xb, 511 + i * 10, 420.5) + fill(420, 511 + i * 10, 1, 9, PURPLE); });
  s += fill(826, 510, 7, 25, 'rgba(146,174,232,.55)') + '<path d="M420.500 460V910" stroke="#000" stroke-dasharray="5 5"/></g>';
  s += label(6.3, 478, '900', 10, 'start', 'fill="#333"') + label(6.3, 493, '450', 10, 'start', 'fill="#333"');
  $('bam-a').innerHTML = s;
  s = '<g shape-rendering="crispEdges">' + coverage(coverB, xm, 860, 1509, 507, 8);
  s += '<path d="M860 478.500H1507M860 493.500H1507" stroke="#999" stroke-dasharray="2 2"/>' + fill(860, 507, 649, 1, '#999') + fill(860, 508, 649, 1, '#c4c4c4');
  s += fill(1472, 505, 1, 2, RED) + fill(1494, 505, 1, 2, PURPLE);
  readsB.forEach((t, i) => { s += drawRow(t, READ.d, xm, 509 + i * 10, 1184.5, true); });
  s += fill(1500, 508, 7, 147, 'rgba(146,174,232,.5)') + '<path d="M1184.500 458V907" stroke="#222" stroke-dasharray="5 5"/></g>';
  s += label(860, 476, '60', 10, 'start', 'fill="#333"') + label(860, 491, '30', 10, 'start', 'fill="#333"');
  $('bam-b').innerHTML = s;
})();

/* Variants table */
const variants = [['INV', 2, 'ALK, EML4', 29224782], ['INV', 2, 'ALK, EML4', 29224783], ['INV', 13, 'RB1', 48367316], ['DUP', 17, 'NF1', 31200515], ['DUP', 6, '', 51294521], ['DEL', 6, '', 51294989],
  ['BND', 6, '', 51295112], ['BND', 6, '', 51295400], ['DEL', 6, 'FILIP1', 75314196], ['DEL', 6, 'GRIK2', 101802142], ['BND', 6, 'ROS1', 117314770], ['BND', 6, 'RP1-179…', 117320174],
  ['DEL', 6, 'RP1-179…', 117320381], ['DEL', 6, 'RP1-179…', 117321573], ['DEL', 6, 'RP1-179…', 117323215], ['DEL', 6, 'RP1-179…', 117324016], ['DEL', 6, 'RP1-179…', 117329434], ['DEL', 6, 'RP1-179…', 117331379]];
$('rows').innerHTML = variants.map(v => `<div class="row"><span class="badge ${v[0]}">${v[0]}</span><span>${v[1]}</span><span class="gname">${v[2]}</span><span>${v[3]}</span><svg class="info" viewBox="0 0 6 14"><path d="M1.500 0h2.500v3h-2.500zM0 5h4.200v7.200h1.600V14H0v-1.800h1.500V6.700H0z"/></svg></div>`).join('');
```
